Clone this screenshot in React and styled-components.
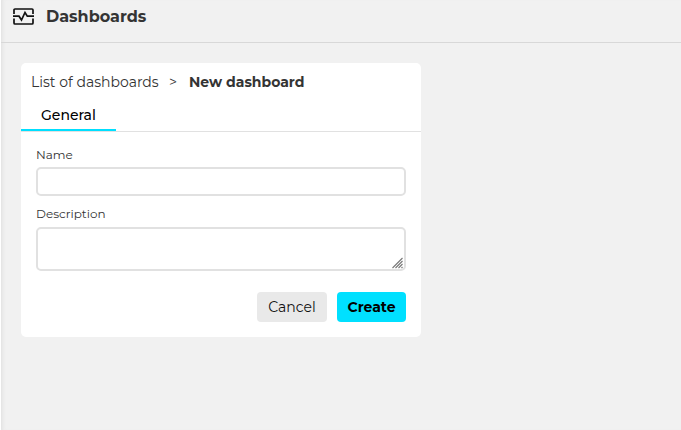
import React from 'react';
import styled, { createGlobalStyle } from 'styled-components';

const GlobalStyle = createGlobalStyle`
  * { box-sizing: border-box; }
  html, body { margin: 0; }
  body {
    background: #f1f1f1;
    color: #343434;
    font-family: Montserrat, Inter, 'Liberation Sans', sans-serif;
    overflow: hidden;
  }
`;

const Page = styled.main`
  height: 100vh;
  border-left: 1px solid #fff;
  box-shadow: inset 4px 0 4px -3px #dedede;
`;

const Header = styled.header`
  display: flex;
  align-items: flex-start;
  gap: 11px;
  height: 43px;
  padding: 7px 0 0 11px;
  border-bottom: 1px solid #d8d8d8;

  svg { display: block; }
`;

const Title = styled.h1`
  margin: 0;
  font-size: 16px;
  line-height: 20px;
  font-weight: 700;
`;

const Card = styled.section`
  width: 400px;
  height: 274px;
  margin: 20px 0 0 20px;
  background: #fff;
  border-radius: 5px;
`;

const Breadcrumbs = styled.nav`
  display: flex;
  align-items: center;
  height: 38px;
  padding: 0 0 0 10px;
  font-size: 14px;
`;

const Crumb = styled.span`
  width: 128px;
  white-space: nowrap;
`;

const Separator = styled.span`
  width: 30px;
  padding-left: 10px;
`;

const CurrentCrumb = styled.strong`
  font-weight: 700;
`;

const Tabs = styled.div`
  display: flex;
  height: 31px;
  border-bottom: 1px solid #e1e1e1;
`;

const Tab = styled.div`
  width: 95px;
  height: 30px;
  padding-left: 20px;
  border-bottom: 2px solid #00dfff;
  color: #000;
  font-size: 14px;
  font-weight: 500;
  line-height: 28px;
`;

const Form = styled.form`
  padding: 15px 15px 0;
`;

const Label = styled.label`
  display: block;
  height: ${(p) => p.$height}px;
  font-size: 12px;
  line-height: 16px;
`;

const Input = styled.input`
  display: block;
  width: 100%;
  height: 29px;
  margin-bottom: 10px;
  border: 2px solid #e1e1e1;
  border-radius: 5px;
  background: #fff;
  outline: none;
`;

const TextAreaFrame = styled.div`
  position: relative;

  svg {
    position: absolute;
    right: 2px;
    bottom: 2px;
    pointer-events: none;
  }
`;

const TextArea = styled.textarea`
  display: block;
  width: 100%;
  height: 44px;
  border: 2px solid #e1e1e1;
  border-radius: 5px;
  background: #fff;
  outline: none;
  resize: none;
`;

const Actions = styled.div`
  display: flex;
  justify-content: flex-end;
  gap: 10px;
  margin-top: 21px;
`;

const Button = styled.button`
  width: ${(p) => (p.$primary ? 69 : 70)}px;
  height: 30px;
  padding: 0 0 1px;
  border: 0;
  border-radius: 4px;
  background: ${(p) => (p.$primary ? '#00e0ff' : '#e9e9e9')};
  color: ${(p) => (p.$primary ? '#000' : '#111')};
  font-family: inherit;
  font-size: 14px;
  font-weight: ${(p) => (p.$primary ? 700 : 400)};
`;

function DashboardIcon() {
  return (
    <svg width="23" height="19" viewBox="0 0 23 19" fill="none" stroke="#111" strokeWidth="1.7">
      <path d="M2 7V3Q2 2 3 2H20Q21 2 21 3V7M2 11.5V16Q2 17 3 17H20Q21 17 21 16V11.5" />
      <path d="M1 9.2H7L9.5 13L13 5.5L15.3 9.2H22" />
    </svg>
  );
}

function ResizeGrip() {
  return (
    <svg width="12" height="12" viewBox="0 0 12 12" fill="none" stroke="#777" strokeWidth="1.1">
      <path d="M0.5 11L10.5 1M3.5 11L10.5 4M6.5 11L10.5 7M9.5 11L10.5 10" />
    </svg>
  );
}

export default function App() {
  return (
    <>
      <GlobalStyle />
      <Page>
        <Header>
          <DashboardIcon />
          <Title>Dashboards</Title>
        </Header>
        <Card>
          <Breadcrumbs>
            <Crumb>List of dashboards</Crumb>
            <Separator>&gt;</Separator>
            <CurrentCrumb>New dashboard</CurrentCrumb>
          </Breadcrumbs>
          <Tabs>
            <Tab>General</Tab>
          </Tabs>
          <Form>
            <Label htmlFor="name" $height={20}>Name</Label>
            <Input id="name" />
            <Label htmlFor="description" $height={21}>Description</Label>
            <TextAreaFrame>
              <TextArea id="description" />
              <ResizeGrip />
            </TextAreaFrame>
            <Actions>
              <Button type="button">Cancel</Button>
              <Button type="button" $primary>Create</Button>
            </Actions>
          </Form>
        </Card>
      </Page>
    </>
  );
}
